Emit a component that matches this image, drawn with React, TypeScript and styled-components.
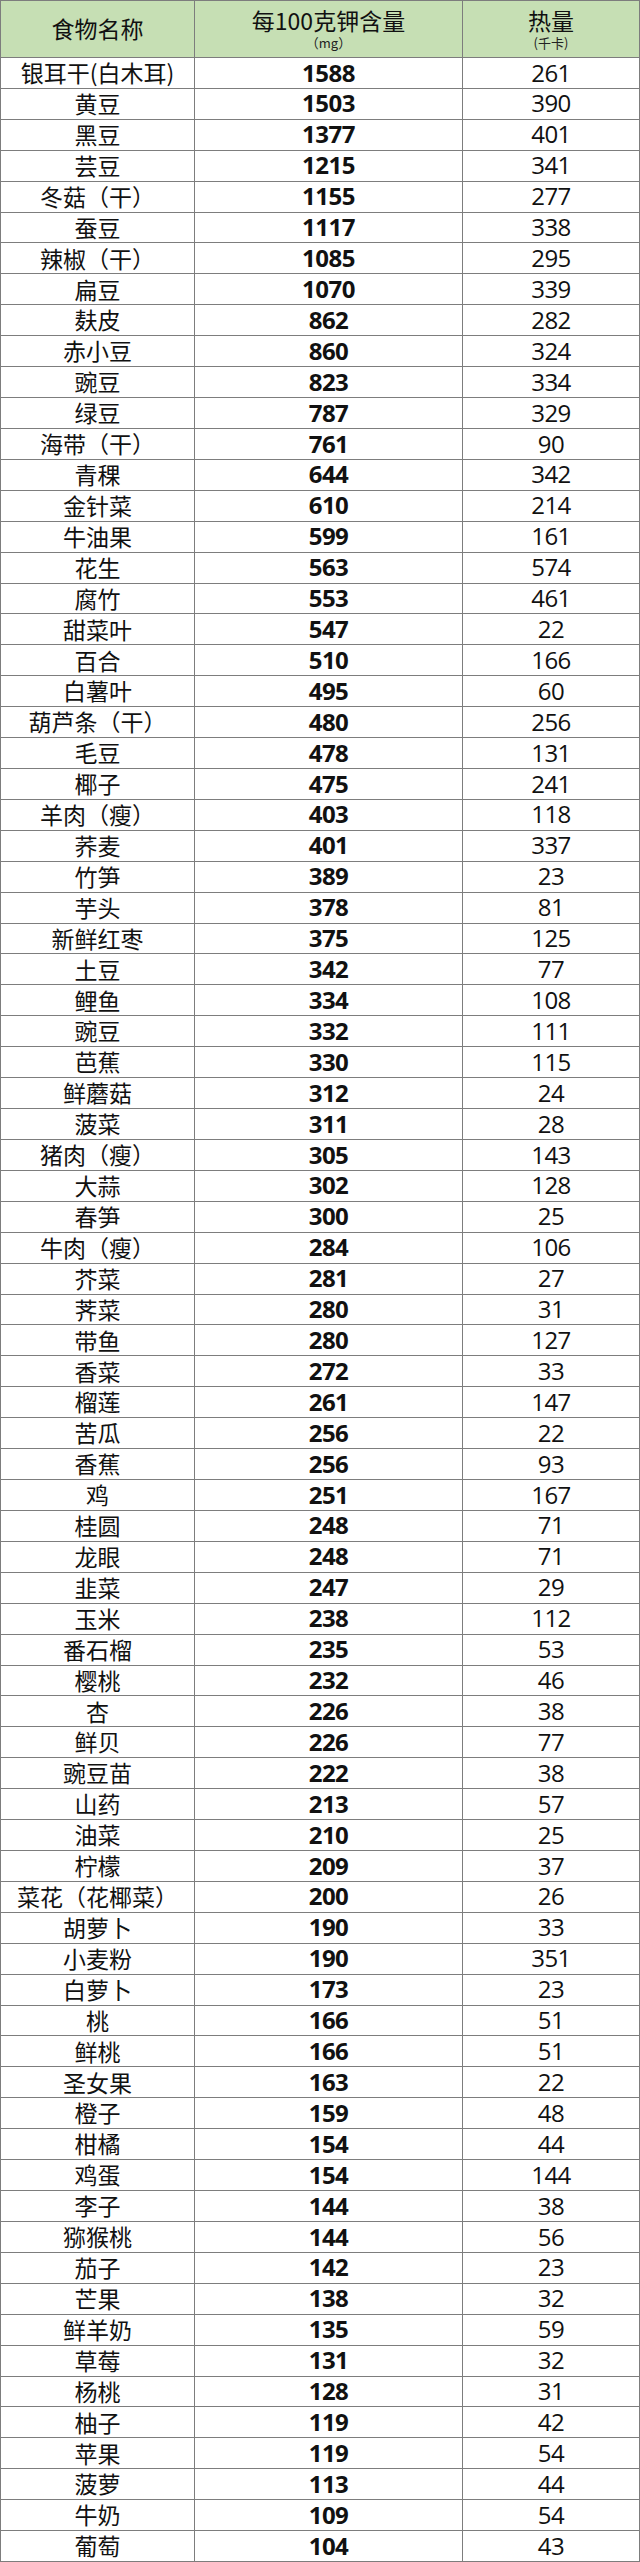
import React from "react";
import styled, { createGlobalStyle } from "styled-components";

const GlobalStyle = createGlobalStyle`
  html, body {
    margin: 0;
    padding: 0;
    background: #fff;
  }
  * {
    box-sizing: border-box;
  }
`;

type Food = [string, number, number];

const foods: Food[] = [
  ["银耳干(白木耳)", 1588, 261],
  ["黄豆", 1503, 390],
  ["黑豆", 1377, 401],
  ["芸豆", 1215, 341],
  ["冬菇（干）", 1155, 277],
  ["蚕豆", 1117, 338],
  ["辣椒（干）", 1085, 295],
  ["扁豆", 1070, 339],
  ["麸皮", 862, 282],
  ["赤小豆", 860, 324],
  ["豌豆", 823, 334],
  ["绿豆", 787, 329],
  ["海带（干）", 761, 90],
  ["青稞", 644, 342],
  ["金针菜", 610, 214],
  ["牛油果", 599, 161],
  ["花生", 563, 574],
  ["腐竹", 553, 461],
  ["甜菜叶", 547, 22],
  ["百合", 510, 166],
  ["白薯叶", 495, 60],
  ["葫芦条（干）", 480, 256],
  ["毛豆", 478, 131],
  ["椰子", 475, 241],
  ["羊肉（瘦）", 403, 118],
  ["荞麦", 401, 337],
  ["竹笋", 389, 23],
  ["芋头", 378, 81],
  ["新鲜红枣", 375, 125],
  ["土豆", 342, 77],
  ["鲤鱼", 334, 108],
  ["豌豆", 332, 111],
  ["芭蕉", 330, 115],
  ["鲜蘑菇", 312, 24],
  ["菠菜", 311, 28],
  ["猪肉（瘦）", 305, 143],
  ["大蒜", 302, 128],
  ["春笋", 300, 25],
  ["牛肉（瘦）", 284, 106],
  ["芥菜", 281, 27],
  ["荠菜", 280, 31],
  ["带鱼", 280, 127],
  ["香菜", 272, 33],
  ["榴莲", 261, 147],
  ["苦瓜", 256, 22],
  ["香蕉", 256, 93],
  ["鸡", 251, 167],
  ["桂圆", 248, 71],
  ["龙眼", 248, 71],
  ["韭菜", 247, 29],
  ["玉米", 238, 112],
  ["番石榴", 235, 53],
  ["樱桃", 232, 46],
  ["杏", 226, 38],
  ["鲜贝", 226, 77],
  ["豌豆苗", 222, 38],
  ["山药", 213, 57],
  ["油菜", 210, 25],
  ["柠檬", 209, 37],
  ["菜花（花椰菜）", 200, 26],
  ["胡萝卜", 190, 33],
  ["小麦粉", 190, 351],
  ["白萝卜", 173, 23],
  ["桃", 166, 51],
  ["鲜桃", 166, 51],
  ["圣女果", 163, 22],
  ["橙子", 159, 48],
  ["柑橘", 154, 44],
  ["鸡蛋", 154, 144],
  ["李子", 144, 38],
  ["猕猴桃", 144, 56],
  ["茄子", 142, 23],
  ["芒果", 138, 32],
  ["鲜羊奶", 135, 59],
  ["草莓", 131, 32],
  ["杨桃", 128, 31],
  ["柚子", 119, 42],
  ["苹果", 119, 54],
  ["菠萝", 113, 44],
  ["牛奶", 109, 54],
  ["葡萄", 104, 43],
];

const Sheet = styled.div`
  display: grid;
  grid-template-columns: 194px 268px 1fr;
  grid-template-rows: 57px repeat(${foods.length}, 1fr);
  width: 640px;
  height: 2562px;
  border-top: 1px solid #7d7d7d;
  border-left: 1px solid #7d7d7d;
  font-family: "Noto Sans CJK SC", "Noto Sans", sans-serif;
  color: #111;
`;

const Cell = styled.div<{ $head?: boolean }>`
  display: flex;
  flex-direction: column;
  align-items: center;
  justify-content: center;
  border-right: 1px solid #7d7d7d;
  border-bottom: 1px solid #7d7d7d;
  background: ${(p) => (p.$head ? "#c6dfb4" : "#fff")};
  white-space: nowrap;
`;

const HeadTitle = styled.span`
  font-size: 23px;
  line-height: 1.2;
  font-weight: 400;
`;

const HeadUnit = styled.span`
  font-size: 13px;
  line-height: 1.2;
  color: #222;
`;

const Name = styled.span`
  font-size: 23px;
  line-height: 1.2;
`;

const Num = styled.span<{ $bold?: boolean }>`
  font-family: "Open Sans", "Noto Sans", sans-serif;
  font-size: 24px;
  line-height: 1.2;
  font-weight: ${(p) => (p.$bold ? 700 : 400)};
  letter-spacing: -0.5px;
`;

export default function App() {
  return (
    <>
      <GlobalStyle />
      <Sheet>
        <Cell $head>
          <HeadTitle>食物名称</HeadTitle>
        </Cell>
        <Cell $head>
          <HeadTitle>每100克钾含量</HeadTitle>
          <HeadUnit>（mg）</HeadUnit>
        </Cell>
        <Cell $head>
          <HeadTitle>热量</HeadTitle>
          <HeadUnit>(千卡)</HeadUnit>
        </Cell>
        {foods.map(([name, potassium, kcal], i) => (
          <React.Fragment key={i}>
            <Cell>
              <Name>{name}</Name>
            </Cell>
            <Cell>
              <Num $bold>{potassium}</Num>
            </Cell>
            <Cell>
              <Num>{kcal}</Num>
            </Cell>
          </React.Fragment>
        ))}
      </Sheet>
    </>
  );
}
